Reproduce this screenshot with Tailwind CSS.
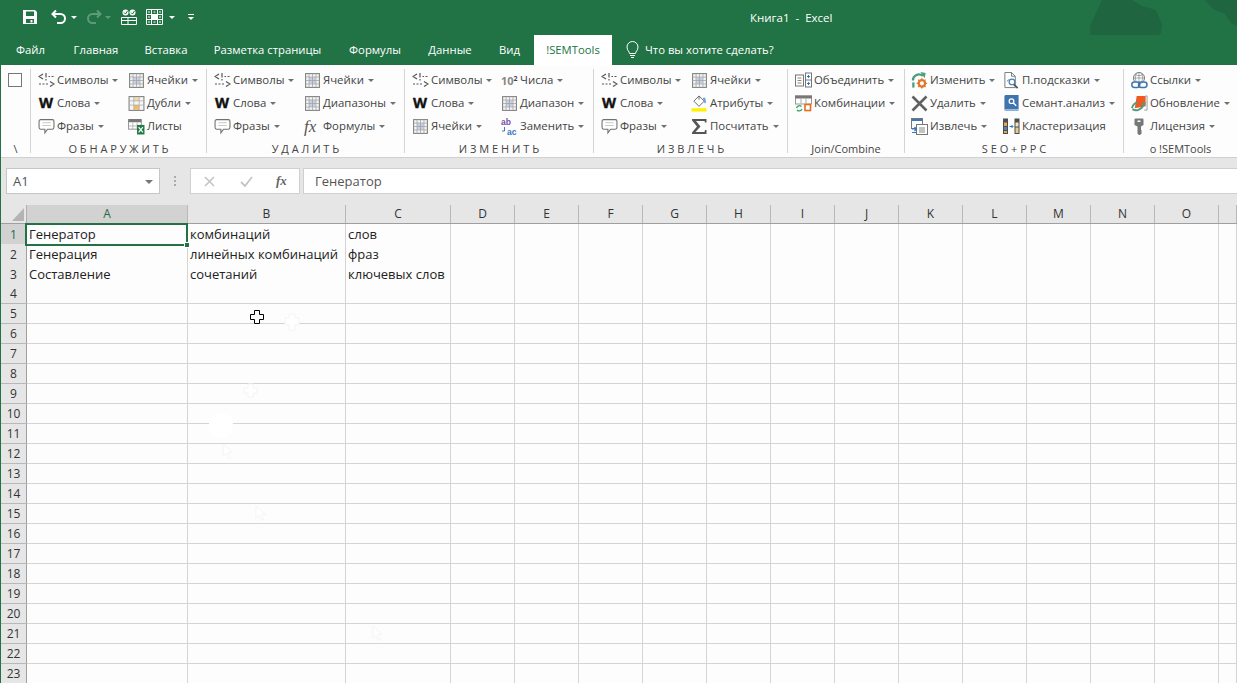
<!DOCTYPE html>
<html lang="ru">
<head>
<meta charset="UTF-8">
<title>Книга1 - Excel</title>
<script src="https://cdn.jsdelivr.net/npm/@tailwindcss/browser@4"></script>
</head>
<body class="relative w-[1237px] h-[683px] overflow-hidden bg-[#e6e6e6] font-['Open_Sans',sans-serif] text-[11.4px] text-[#444]">

<!-- icon sprites -->
<svg class="hidden">
  <symbol id="i-sym" viewBox="0 0 17 16">
    <path d="M5 1.5 1 4l4 2.5M8 .5V5M8 6.5V8M10.5 4h1.5M13.5 4h2M1 11.5h2M4.5 11.5h2M8 11.5h2M12 9l4 2.5L12 14" fill="none" stroke="#555" stroke-width="1.2"/>
  </symbol>
  <symbol id="i-cells" viewBox="0 0 16 16">
    <rect x="1.5" y="1.5" width="13" height="13" fill="#f4f4f4" stroke="#808080"/>
    <rect x="5" y="5" width="6" height="6" fill="#c3d0e4"/>
    <path d="M4.75 1.5v13M8 1.5v13M11.25 1.5v13M1.5 4.75h13M1.5 8h13M1.5 11.25h13" stroke="#a0a0a0" stroke-width=".7"/>
  </symbol>
  <symbol id="i-dub" viewBox="0 0 16 16">
    <rect x="1" y="1.5" width="14" height="13" fill="#f6f6f6" stroke="#808080"/>
    <rect x="5.5" y="2" width="5" height="3.5" fill="#f1d9a8"/>
    <rect x="5.5" y="9.5" width="5" height="4.5" fill="#efbd6a"/>
    <path d="M5.5 1.5v13M10.5 1.5v13M1 5.5h14M1 9.5h14" stroke="#a8a8a8" stroke-width=".7"/>
  </symbol>
  <symbol id="i-sheet" viewBox="0 0 16 16">
    <rect x=".5" y="1.5" width="12" height="9" fill="#fff" stroke="#999"/>
    <rect x=".5" y="1" width="12" height="3" fill="#777"/>
    <path d="M4.5 4v7M8.5 4v7M.5 7.5h8" stroke="#aaa" stroke-width=".7"/>
    <rect x="8.5" y="6.5" width="7" height="9" fill="#1f7a45"/>
    <path d="m10 8.5 4 5M14 8.5l-4 5" stroke="#fff" stroke-width="1.1"/>
  </symbol>
  <symbol id="i-bubble" viewBox="0 0 16 16">
    <path d="M2.5 1.5h11a1.5 1.5 0 0 1 1.5 1.5v6a1.5 1.5 0 0 1-1.5 1.5H9l-2.5 3.5v-3.5h-4A1.5 1.5 0 0 1 1 9V3a1.5 1.5 0 0 1 1.5-1.5Z" fill="#fff" stroke="#707070"/>
    <path d="M4 4.5h8M4 7h8" stroke="#c8c8c8"/>
  </symbol>
  <symbol id="i-sigma" viewBox="0 0 17 17">
    <path d="M1 1h14.5v3.5H14l-.5-1.5H5l4.5 5.5L4.5 14h9l.5-2h1.5v4H1v-1.5L6 8.5 1 2.5Z" fill="#555"/>
  </symbol>
  <symbol id="i-bucket" viewBox="0 0 17 18">
    <rect x="0" y="14" width="16" height="3.5" fill="#fff200"/>
    <path d="m8 1 5.5 5.5L8 12 2.5 6.5Z" fill="#fff" stroke="#666"/>
    <path d="M8 1v4" stroke="#666"/>
    <path d="M12 3h2.5l1 5-1.5 1Z" fill="#6d9ed6"/>
  </symbol>
  <symbol id="i-merge" viewBox="0 0 17 16">
    <rect x=".5" y="2.5" width="8" height="11" fill="#fff" stroke="#777"/>
    <path d="M2.5 5.5h4M2.5 8h4M2.5 10.5h4" stroke="#888"/>
    <rect x="10.5" y=".5" width="6" height="14" fill="#fff" stroke="#777"/>
    <path d="M10.5 7.5h6" stroke="#777"/>
    <path d="M12 4h3M13.5 2.5v3M12 11h3M13.5 9.5v3" stroke="#2f78c4"/>
  </symbol>
  <symbol id="i-combo" viewBox="0 0 17 16">
    <rect x=".5" y=".5" width="16" height="8" fill="#fff" stroke="#999"/>
    <rect x="0" y="0" width="17" height="3" fill="#777"/>
    <path d="M6 3v5M11 3v5" stroke="#aaa"/>
    <path d="M1.5 12.5a3 3 0 0 1 5-1.5M7 13.5a3 3 0 0 1-5 1" fill="none" stroke="#39a36a" stroke-width="1.3"/>
    <rect x="10" y="9" width="5.5" height="6" fill="#fff" stroke="#e0701c" stroke-width="1.6"/>
  </symbol>
  <symbol id="i-change" viewBox="0 0 18 18">
    <path d="M2 9a6.5 6.5 0 0 1 10.5-5" fill="none" stroke="#4a9d7f" stroke-width="2.4"/>
    <path d="m10 0 5.5 1-1 5.5Z" fill="#4a9d7f"/>
    <path d="M2.5 11v5.5" stroke="#4a9d7f" stroke-width="2.4"/>
    <circle cx="11.5" cy="12" r="3.4" fill="none" stroke="#e3772a" stroke-width="2.4"/>
    <path d="M11.5 6.5v11M6 12h11M7.6 8.1l7.8 7.8M15.4 8.1l-7.8 7.8" stroke="#e3772a" stroke-width="1.4" stroke-dasharray="2 7"/>
  </symbol>
  <symbol id="i-del" viewBox="0 0 17 17">
    <path d="m1.5 1.5 14 14M15.5 1.5l-14 14" stroke="#606060" stroke-width="2.6"/>
  </symbol>
  <symbol id="i-extract" viewBox="0 0 17 17">
    <rect x=".5" y=".5" width="11" height="10" fill="#fff" stroke="#777"/>
    <rect x="1" y="1" width="10" height="2" fill="#3f78b5"/>
    <rect x="5.5" y="6.5" width="11" height="10" fill="#fff" stroke="#777"/>
    <path d="M8 10h6M8 12h6M8 14h6" stroke="#888"/>
    <path d="M1 11h4M3.5 9 5.5 11l-2 2M5 14.5H1" fill="none" stroke="#2f78c4" stroke-width="1.2"/>
  </symbol>
  <symbol id="i-hint" viewBox="0 0 17 18">
    <path d="M1.5.5h7l4 4v12h-11Z" fill="#fff" stroke="#777"/>
    <path d="M8.5.5v4h4" fill="none" stroke="#777"/>
    <circle cx="9" cy="10.5" r="3" fill="#fff" stroke="#4a7fb5" stroke-width="1.3"/>
    <path d="m11 13 4 4" stroke="#555" stroke-width="1.8"/>
    <path d="M4 10a1.5 1.5 0 0 1 2-1.5" fill="none" stroke="#4a7fb5"/>
  </symbol>
  <symbol id="i-book" viewBox="0 0 17 18">
    <path d="M2.5 0H16v15H2.5A1.5 1.5 0 0 0 1 16.5V1.5A1.5 1.5 0 0 1 2.5 0Z" fill="#3e75b0"/>
    <path d="M1 16.5A1.5 1.5 0 0 1 2.5 15H16v2H2.5Z" fill="#8fb0d4"/>
    <circle cx="8.5" cy="6.5" r="2.5" fill="none" stroke="#fff" stroke-width="1.3"/>
    <path d="m10.5 8.5 3 3" stroke="#fff" stroke-width="1.5"/>
  </symbol>
  <symbol id="i-cluster" viewBox="0 0 17 16">
    <rect x="0" y="0" width="5" height="15.5" fill="#4d4d4d"/>
    <rect x="1" y="4" width="3" height="3.5" fill="#e8a94c"/>
    <rect x="1" y="8.5" width="3" height="3" fill="#4d84c4"/>
    <rect x="1" y="12.5" width="3" height="2" fill="#e8a94c"/>
    <rect x="11.5" y="0" width="5" height="15.5" fill="#4d4d4d"/>
    <rect x="12.5" y="4" width="3" height="4" fill="#f3e3c2"/>
    <rect x="12.5" y="9" width="3" height="5.5" fill="#e8c98c"/>
    <path d="M6.5 8h3.5M8.5 6.5 10 8l-1.5 1.5" fill="none" stroke="#2f78c4"/>
  </symbol>
  <symbol id="i-link" viewBox="0 0 17 17">
    <circle cx="8" cy="6" r="5.5" fill="#fff" stroke="#777"/>
    <path d="M2.5 6h11M8 .5v11M4 2.5c2.5 1.5 5.5 1.5 8 0M5.5 1.5c-1.5 2.5-1.5 6 0 8.5M10.5 1.5c1.5 2.5 1.5 6 0 8.5" fill="none" stroke="#888" stroke-width=".7"/>
    <rect x=".8" y="10" width="8" height="5.5" rx="2.7" fill="#fff" stroke="#3e75b0" stroke-width="1.5"/>
    <rect x="7.5" y="10" width="8.5" height="5.5" rx="2.7" fill="none" stroke="#3e75b0" stroke-width="1.5"/>
  </symbol>
  <symbol id="i-update" viewBox="0 0 18 18">
    <path d="M6 1h9.5v11L4 14Z" fill="#ef5a24"/>
    <path d="M15.5 1H17v15h-3" fill="none" stroke="#999"/>
    <path d="M1 14c.5-4 4-6 6-6M1.5 15c4 2.5 9 1 12.5-5" fill="none" stroke="#4f9e84" stroke-width="2"/>
    <path d="m11.5 8.5 4-1-.5 4Z" fill="#4f9e84"/>
  </symbol>
  <symbol id="i-key" viewBox="0 0 16 17">
    <path d="M4 .5h7a1 1 0 0 1 1 1V7l-2.5 1.5V12l1 1-1 1 1 1-2 2h-1L6 15.5v-7L3 7V1.5a1 1 0 0 1 1-1Z" fill="#777"/>
    <rect x="6" y="2.5" width="3" height="1.5" fill="#fff"/>
  </symbol>
  <symbol id="i-caret" viewBox="0 0 6 3">
    <path d="M0 0h6L3 3Z" fill="#707070"/>
  </symbol>
  <symbol id="i-arrow" viewBox="0 0 14 18">
    <path d="M1 1v13l3-3 2.5 5.5 2.5-1L6.5 10H11Z" fill="#fff" stroke="#f3f3f3"/>
  </symbol>
</svg>

<!-- title bar -->
<header class="relative h-[35px] bg-[#217346] text-white">
  <svg class="absolute left-[1085px] top-0 w-[152px] h-[65px]" viewBox="0 0 152 65">
    <path d="M17 0h30l10 6 14 4 6 14-1 9-6 6-4 13H18l-4-7-8-4-1-15 6-13Z" fill="#1f6540"/>
    <path d="M120 0h32v26l-6-3-6-9-12-5Z" fill="#1f6540"/>
  </svg>
  <div class="absolute left-[21px] top-[8px] flex items-center h-[18px]">
    <!-- save -->
    <svg class="w-[16px] h-[16px]" viewBox="0 0 16 16"><path fill-rule="evenodd" d="M1 1h12l2 2v12H1ZM4 2.5V7h8V2.5ZM4 10v4h8v-4Zm4.5 1h2v2.500h-2Z" fill="#fff" transform="translate(1 0)"/></svg>
    <!-- undo -->
    <svg class="w-[16px] h-[16px] ml-[14px]" viewBox="0 0 16 16"><path d="M5 1.5 1.500 5 5 8.500M2 5h7.500a4 4 0 0 1 0 9H6" fill="none" stroke="#fff" stroke-width="2"/></svg>
    <svg class="w-[6px] h-[3px] ml-[4px]" viewBox="0 0 6 3"><path d="M0 0h6L3 3Z" fill="#fff"/></svg>
    <!-- redo -->
    <svg class="w-[16px] h-[16px] ml-[9px]" viewBox="0 0 16 16"><path d="M11 1.5 14.500 5 11 8.500M14 5H6.500a4 4 0 0 0 0 9H10" fill="none" stroke="#5e9b7c" stroke-width="2"/></svg>
    <svg class="w-[6px] h-[3px] ml-[3px]" viewBox="0 0 6 3"><path d="M0 0h6L3 3Z" fill="#5e9b7c"/></svg>
    <!-- checks -->
    <svg class="w-[16px] h-[16px] ml-[10px]" viewBox="0 0 16 16"><circle cx="4.5" cy="3.5" r="3" fill="#fff"/><circle cx="11.5" cy="3.5" r="3" fill="#fff"/><path d="M.5 8.5h15v7H.5ZM.5 11.5h15M7 8.5v7" fill="none" stroke="#fff"/><path d="m3 3.5 1.5 1.5 2-3M10 3.5l1.5 1.5 2-3" fill="none" stroke="#217346"/></svg>
    <!-- grid -->
    <svg class="w-[17px] h-[16px] ml-[9px]" viewBox="0 0 17 16"><path d="M.5.5h16v15H.5ZM.5 5.5h16M.5 10.5h16M5.5.5v15M11.5.5v15" fill="none" stroke="#fff"/><rect x="5.5" y="5.5" width="6" height="5" fill="#fff"/><path d="M2 3h2M7.5 3h2M13 3h2M2 8h2M13 8h2M2 13h2M7.5 13h2M13 13h2" stroke="#fff"/></svg>
    <svg class="w-[6px] h-[3px] ml-[6px]" viewBox="0 0 6 3"><path d="M0 0h6L3 3Z" fill="#fff"/></svg>
    <!-- customize -->
    <svg class="w-[6px] h-[7px] ml-[13px]" viewBox="0 0 6 7"><path d="M0 0h6v1H0Z" fill="#fff"/><path d="M0 3h6L3 6Z" fill="#fff"/></svg>
  </div>
  <div class="absolute left-[750px] top-[10px] leading-[16px] text-[11.5px] whitespace-pre">Книга1  -  Excel</div>
</header>

<!-- tabs -->
<nav class="relative h-[30px] bg-[#217346] pl-[1px] flex text-white text-[11.3px]">
  <a class="w-[59px] flex items-center justify-center">Файл</a>
  <a class="w-[72px] flex items-center justify-center">Главная</a>
  <a class="w-[68px] flex items-center justify-center">Вставка</a>
  <a class="w-[135px] flex items-center justify-center">Разметка страницы</a>
  <a class="w-[80px] flex items-center justify-center">Формулы</a>
  <a class="w-[70px] flex items-center justify-center">Данные</a>
  <a class="w-[49px] flex items-center justify-center">Вид</a>
  <a class="w-[78px] flex items-center justify-center bg-white text-[#217346]">!SEMTools</a>
  <div class="ml-[13px] flex items-center">
    <svg class="w-[15px] h-[18px]" viewBox="0 0 15 18"><path d="M4.5 12.5c0-2-2.500-3-2.500-6.500a5.500 5.500 0 0 1 11 0c0 3.500-2.500 4.500-2.500 6.500ZM5 14.500h5M6 16.500h3" fill="none" stroke="#fff"/></svg>
    <span class="ml-[5px]">Что вы хотите сделать?</span>
  </div>
</nav>

<!-- ribbon -->
<section id="ribbon" class="ml-[1px] h-[93px] pt-[4px] pb-[4px] bg-[#fdfdfd] border-b border-[#d0d0d0] flex"></section>

<!-- formula bar -->
<div class="h-[47px] pt-[10px] pl-[5px] flex items-start ml-[1px]">
  <div class="w-[154px] h-[26px] pt-[1px] bg-white border border-[#c6c6c6] flex items-center justify-between pl-[6px] pr-[6px] text-[#555] text-[13px]">
    A1
    <svg class="w-[8px] h-[4px]" viewBox="0 0 8 4"><path d="M0 0h8L4 4Z" fill="#777"/></svg>
  </div>
  <div class="w-[30px] h-[26px] flex flex-col items-center justify-center gap-[2px]">
    <i class="w-[2px] h-[2px] bg-[#aaa]"></i><i class="w-[2px] h-[2px] bg-[#aaa]"></i><i class="w-[2px] h-[2px] bg-[#aaa]"></i>
  </div>
  <div class="w-[110px] h-[26px] bg-white border border-[#d0d0d0] flex items-center">
    <svg class="w-[11px] h-[11px] ml-[13px]" viewBox="0 0 11 11"><path d="m1 1 9 9M10 1l-9 9" stroke="#c4c4c4" stroke-width="1.6"/></svg>
    <svg class="w-[13px] h-[11px] ml-[25px]" viewBox="0 0 13 11"><path d="m1 6 4 4 7-9" fill="none" stroke="#c4c4c4" stroke-width="1.8"/></svg>
    <span class="ml-[23px] font-['Liberation_Serif',serif] italic font-bold text-[13px] text-[#666]">fx</span>
  </div>
  <div class="ml-[3px] flex-1 h-[26px] pt-[1px] bg-white border-y border-l border-[#d0d0d0] pl-[11px] flex items-center text-[#555] text-[13px]">Генератор</div>
</div>

<!-- sheet -->
<main id="sheet" class="relative text-[13px] text-[#222]"></main>

<!-- cursor -->
<svg class="absolute left-[249px] top-[309px] w-[16px] h-[16px]" viewBox="0 0 16 16"><path d="M5.5 1.5h5v4h4v5h-4v4h-5v-4h-4v-5h4Z" fill="#fff" stroke="#000"/></svg>

<!-- gif leftovers of earlier cursor frames -->
<svg class="absolute left-[284px] top-[313px] w-[16px] h-[18px]" viewBox="0 0 16 18"><path d="M5 1h6v4h4v7h-4v5H5v-5H1V5h4Z" fill="#fff" stroke="#f4f4f4"/></svg>
<svg class="absolute left-[243px] top-[383px] w-[15px] h-[15px]" viewBox="0 0 15 15"><path d="M5 1h5v4h4v5h-4v4H5v-4H1V5h4Z" fill="#fff" stroke="#f4f4f4"/></svg>
<i class="absolute left-[209px] top-[413px] w-[24px] h-[25px] rounded-full bg-white"></i>
<svg class="absolute left-[222px] top-[443px] w-[13px] h-[17px]"><use href="#i-arrow"/></svg>
<svg class="absolute left-[255px] top-[505px] w-[13px] h-[17px]"><use href="#i-arrow"/></svg>
<svg class="absolute left-[372px] top-[625px] w-[13px] h-[17px]"><use href="#i-arrow"/></svg>

<!-- workbook edge -->
<i class="absolute left-0 top-[65px] bottom-0 w-[1px] bg-[#217346]"></i>

<script>
  function item(it) {
    var caret = it[2] === false ? '' : '<svg class="w-[6px] h-[3px] ml-[4px] shrink-0"><use href="#i-caret"/></svg>';
    return '<div class="h-[23px] pb-[1px] flex items-center whitespace-nowrap"><span class="w-[19px] h-[18px] shrink-0 flex items-center">' + icon(it[0]) + '</span><span>' + it[1] + '</span>' + caret + '</div>';
  }
  function icon(name) {
    if (name === 'W') return '<b class="ml-[1px] font-[\'Liberation_Sans\',sans-serif] font-bold text-[14.5px] leading-none text-[#111] [-webkit-text-stroke:0.4px_#111]">W</b>';
    if (name === 'fx') return '<i class="font-[\'Liberation_Serif\',serif] text-[17px] leading-none text-[#555]">fx</i>';
    if (name === '10') return '<span class="font-[\'Liberation_Sans\',sans-serif] font-bold text-[11px] leading-none text-[#888]">10<sup class="text-[7px] text-[#444]">2</sup></span>';
    if (name === 'ab') return '<svg class="w-[17px] h-[18px]" viewBox="0 0 17 18"><text x="0" y="7.5" font-family="Liberation Sans" font-size="8.5" font-weight="bold" fill="#7b4ea8">ab</text><text x="6" y="17.5" font-family="Liberation Sans" font-size="8.5" font-weight="bold" fill="#3b78c0">ac</text><path d="M3.5 10v4H1" fill="none" stroke="#3b78c0"/></svg>';
    return '<svg class="w-[17px] h-[17px]"><use href="#i-' + name + '"/></svg>';
  }
  var groups = [
    { w: 'w-[176px]', pl: 'pl-[7px]', col: 'w-[90px]', label: 'О Б Н А Р У Ж И Т Ь', cols: [
      [['sym','Символы'],['W','Слова'],['bubble','Фразы']],
      [['cells','Ячейки'],['dub','Дубли'],['sheet','Листы',false]] ] },
    { w: 'w-[198px]', pl: 'pl-[7px]', col: 'w-[90px]', label: 'У Д А Л И Т Ь', cols: [
      [['sym','Символы'],['W','Слова'],['bubble','Фразы']],
      [['cells','Ячейки'],['cells','Диапазоны'],['fx','Формулы']] ] },
    { w: 'w-[189px]', pl: 'pl-[7px]', col: 'w-[89px]', label: 'И З М Е Н И Т Ь', cols: [
      [['sym','Символы'],['W','Слова'],['cells','Ячейки']],
      [['10','Числа'],['cells','Диапазон'],['ab','Заменить']] ] },
    { w: 'w-[194px]', pl: 'pl-[7px]', col: 'w-[90px]', label: 'И З В Л Е Ч Ь', cols: [
      [['sym','Символы'],['W','Слова'],['bubble','Фразы']],
      [['cells','Ячейки'],['bucket','Атрибуты'],['sigma','Посчитать']] ] },
    { w: 'w-[117px]', pl: 'pl-[7px]', col: '', label: 'Join/Combine', cols: [
      [['merge','Объединить'],['combo','Комбинации']] ] },
    { w: 'w-[219px]', pl: 'pl-[6px]', col: 'w-[92px]', label: 'S E O + P P C', cols: [
      [['change','Изменить'],['del','Удалить'],['extract','Извлечь']],
      [['hint','П.подсказки'],['book','Семант.анализ'],['cluster','Кластеризация',false]] ] },
    { w: 'flex-1', pl: 'pl-[7px]', col: '', label: 'о !SEMTools', cols: [
      [['link','Ссылки'],['update','Обновление'],['key','Лицензия']] ] }
  ];

  var ribbon = '<div class="w-[30px] border-r border-[#d4d4d4] flex flex-col items-center"><i class="w-[14px] h-[14px] border border-[#777] bg-white mt-[4px] mr-[2px]"></i><span class="mt-auto -mb-[3px] h-[15px] leading-[15px] text-[11px]">\\</span></div>';
  groups.forEach(function (g, i) {
    var border = i < groups.length - 1 ? ' border-r border-[#d4d4d4]' : '';
    ribbon += '<div class="' + g.w + border + ' shrink-0 flex flex-col"><div class="flex ' + g.pl + '">';
    g.cols.forEach(function (c, n) {
      ribbon += '<div class="shrink-0 ' + (n === 0 ? g.col : '') + '">' + c.map(item).join('') + '</div>';
    });
    ribbon += '</div><div class="mt-auto -mb-[3px] h-[15px] leading-[15px] text-center text-[11px]">' + g.label + '</div></div>';
  });
  document.getElementById('ribbon').innerHTML = ribbon;

  // sheet grid: first row is the column header
  var cols = ['A','B','C','D','E','F','G','H','I','J','K','L','M','N','O',''];
  var data = {
    1: ['Генератор','комбинаций','слов'],
    2: ['Генерация','линейных комбинаций','фраз'],
    3: ['Составление','сочетаний','ключевых слов']
  };
  var rowCls = 'ml-[1px] grid grid-cols-[26px_161px_158px_105px_repeat(12,64px)_1fr]';
  var html = '<div class="' + rowCls + ' h-[19px] bg-[#e6e6e6] border-b border-[#9f9f9f]">';
  html += '<div class="border-r border-[#b0b0b0] relative"><svg class="absolute left-[11px] top-[3px] w-[12px] h-[13px]" viewBox="0 0 12 13"><path d="M12 0v13H0Z" fill="#b4b4b4"/></svg></div>';
  cols.forEach(function (c, i) {
    var sel = i === 0 ? ' bg-[#d2d2d2] text-[#1f6b42]' : ' text-[#333]';
    html += '<div class="border-r border-[#b8b8b8] flex items-center justify-center text-[12px]' + sel + '">' + c + '</div>';
  });
  html += '</div>';
  for (var r = 1; r <= 23; r++) {
    var sel = r === 1 ? ' bg-[#d2d2d2] text-[#1f6b42]' : ' bg-[#e6e6e6] text-[#333]';
    html += '<div class="' + rowCls + ' h-[20px]">';
    html += '<div class="pt-[1px] border-r border-b border-r-[#9f9f9f] border-b-[#b8b8b8] flex items-center justify-center text-[12px] leading-[16px]' + sel + '">' + r + '</div>';
    cols.forEach(function (c, i) {
      var t = (data[r] || [])[i] || '';
      var active = r === 1 && i === 0 ? '<i class="absolute z-10 -left-[2px] -top-[1px] -right-[1px] -bottom-[1px] border-2 border-[#217346]"></i><i class="absolute z-10 -right-[3px] -bottom-[3px] w-[6px] h-[6px] bg-[#217346] border border-white"></i>' : '';
      html += '<div class="relative bg-[#fdfdfd] border-r border-b border-[#d4d4d4] pl-[2px] pt-[1px] flex items-center whitespace-nowrap">' + t + active + '</div>';
    });
    html += '</div>';
  }
  document.getElementById('sheet').innerHTML = html;
</script>
</body>
</html>
